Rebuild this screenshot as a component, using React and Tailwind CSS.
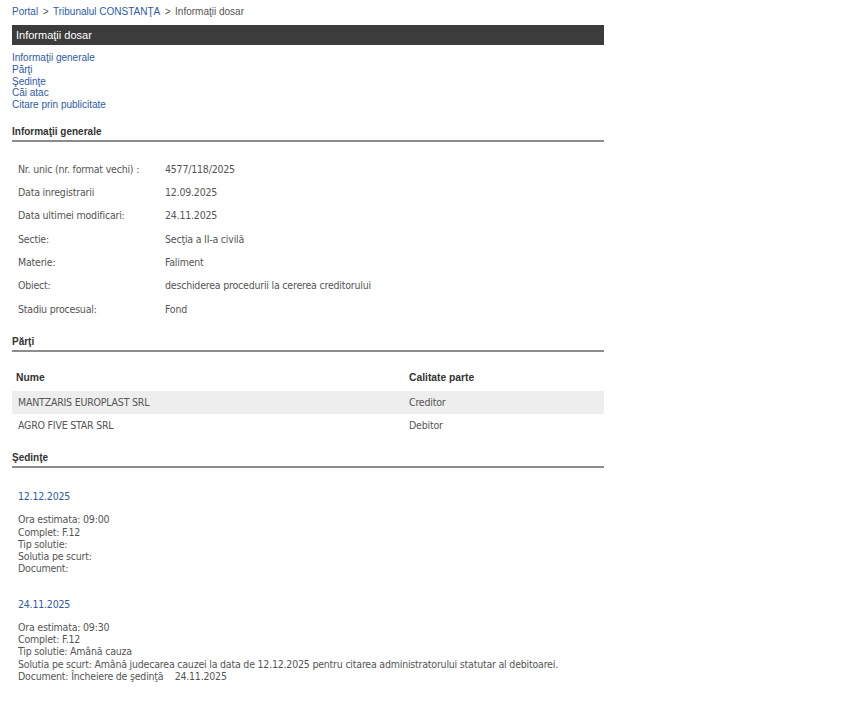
import React from "react";

const bodyFont = "font-['DejaVu_Sans_Condensed','DejaVu_Sans',sans-serif] text-[10.5px] tracking-[-0.2px]";

function Heading({ children }) {
  return (
    <div className="mt-[14px] border-b-2 border-[#8c8c8c] pb-[1px] font-['Liberation_Sans',Arial,sans-serif] text-[10px] font-bold leading-[14px] text-[#333]">
      {children}
    </div>
  );
}

const info = [
  ["Nr. unic (nr. format vechi) :", "4577/118/2025"],
  ["Data inregistrarii", "12.09.2025"],
  ["Data ultimei modificari:", "24.11.2025"],
  ["Sectie:", "Secţia a II-a civilă"],
  ["Materie:", "Faliment"],
  ["Obiect:", "deschiderea procedurii la cererea creditorului"],
  ["Stadiu procesual:", "Fond"],
];

export default function App() {
  return (
    <div className="min-h-[703px] bg-white pl-3 pt-[5px] font-['Liberation_Sans',Arial,sans-serif] text-[#555]">
      <div className="w-[592px]">
        <div className="flex text-[10px] leading-[14px] text-[#555]">
          <span className="text-[#2e5aa6]">Portal</span>
          <span className="px-[4.5px]">&gt;</span>
          <span className="text-[#2e5aa6]">Tribunalul CONSTANŢA</span>
          <span className="px-[4.5px]">&gt;</span>
          <span>Informaţii dosar</span>
        </div>
        <div className="mt-[6px] h-5 bg-[#3c3c3c] pl-1 text-[11px] leading-5 text-white">Informaţii dosar</div>
        <div className="mt-[7px] flex flex-col text-[10px] leading-[11.75px] text-[#2e5aa6]">
          <span>Informaţii generale</span>
          <span>Părţi</span>
          <span>Şedinţe</span>
          <span>Căi atac</span>
          <span>Citare prin publicitate</span>
        </div>

        <Heading>Informaţii generale</Heading>
        <div className={`mt-[16px] flex flex-col text-[#555] ${bodyFont}`}>
          {info.map(([k, v]) => (
            <div key={k} className="flex h-[23.33px] items-center whitespace-nowrap">
              <div className="w-[153px] shrink-0 pl-[6px]">{k}</div>
              <div>{v}</div>
            </div>
          ))}
        </div>

        <Heading>Părţi</Heading>
        <div className={`mt-[12px] text-[#555] ${bodyFont}`}>
          <div className="flex h-[27px] items-center font-['Liberation_Sans',Arial,sans-serif] text-[10.3px] font-bold tracking-normal text-[#333]">
            <div className="w-[397px] pl-[4px]">Nume</div>
            <div>Calitate parte</div>
          </div>
          <div className="flex h-[23px] items-center bg-[#eeeeee]">
            <div className="w-[397px] pl-[6px]">MANTZARIS EUROPLAST SRL</div>
            <div>Creditor</div>
          </div>
          <div className="flex h-[23px] items-center">
            <div className="w-[397px] pl-[6px]">AGRO FIVE STAR SRL</div>
            <div>Debitor</div>
          </div>
        </div>

        <Heading>Şedinţe</Heading>
        <div className={`pl-[6px] text-[#555] ${bodyFont}`}>
          <div className="mt-[22px] leading-[12.25px] text-[#2e5aa6]">12.12.2025</div>
          <div className="mt-[11px] flex flex-col leading-[12.25px]">
            <span>Ora estimata: 09:00</span>
            <span>Complet: F.12</span>
            <span>Tip solutie: </span>
            <span>Solutia pe scurt: </span>
            <span>Document: </span>
          </div>
          <div className="mt-[23px] leading-[12.25px] text-[#2e5aa6]">24.11.2025</div>
          <div className="mt-[11px] flex flex-col leading-[12.25px]">
            <span>Ora estimata: 09:30</span>
            <span>Complet: F.12</span>
            <span>Tip solutie: Amână cauza</span>
            <span className="whitespace-nowrap">Solutia pe scurt: Amână judecarea cauzei la data de 12.12.2025 pentru citarea administratorului statutar al debitoarei.</span>
            <span>Document: Încheiere de şedinţă&nbsp;&nbsp;&nbsp;&nbsp;24.11.2025</span>
          </div>
        </div>
      </div>
    </div>
  );
}
